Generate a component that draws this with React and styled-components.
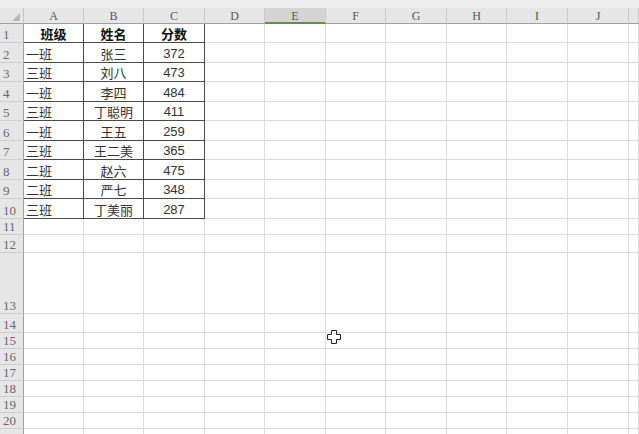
import React from 'react'
import styled, { createGlobalStyle } from 'styled-components'

const GlobalStyle = createGlobalStyle`
  html, body {
    margin: 0;
    padding: 0;
    background: #fff;
    overflow: hidden;
  }
  body {
    width: 639px;
    height: 434px;
  }
`

// row header + columns A..J, K takes the rest
const colWidths = [24, 60, 60, 61, 60, 61, 60, 61, 60, 61, 61]
const letters = ['A', 'B', 'C', 'D', 'E', 'F', 'G', 'H', 'I', 'J', '']
const rowHeights = [19, 20, 19, 20, 19, 20, 19, 20, 19, 20, 16, 18, 61, 19, 16, 16, 16, 16, 16, 16, 16]

const data = [
  ['班级', '姓名', '分数'],
  ['一班', '张三', '372'],
  ['三班', '刘八', '473'],
  ['一班', '李四', '484'],
  ['三班', '丁聪明', '411'],
  ['一班', '王五', '259'],
  ['三班', '王二美', '365'],
  ['二班', '赵六', '475'],
  ['二班', '严七', '348'],
  ['三班', '丁美丽', '287'],
]

const Sheet = styled.div`
  position: relative;
  display: grid;
  grid-template-columns: ${colWidths.map(w => w + 'px').join(' ')} 1fr;
  grid-template-rows: 8px 16px ${rowHeights.map(h => h + 'px').join(' ')};
  width: 639px;
  height: 434px;
  overflow: hidden;
`

const Band = styled.div`
  grid-column: 1 / -1;
  background: #eeeeee;
`

const Corner = styled.div`
  position: relative;
  background: #e6e6e6;
  border-right: 1px solid #c4c4c4;
  border-bottom: 1px solid #9f9f9f;
  box-sizing: border-box;
  &::after {
    content: '';
    position: absolute;
    right: 3px;
    bottom: 2px;
    width: 0;
    height: 0;
    border-left: 8px solid transparent;
    border-bottom: 8px solid #b8b8b8;
  }
`

const ColHead = styled.div`
  box-sizing: border-box;
  background: ${p => (p.$active ? '#d4d4d4' : '#e6e6e6')};
  border-right: 1px solid #c9c9c9;
  border-bottom: ${p => (p.$active ? '2px solid #5e9150' : '1px solid #9f9f9f')};
  display: flex;
  align-items: center;
  justify-content: center;
  font-family: 'Liberation Serif', 'DejaVu Serif', serif;
  font-size: 12px;
  color: #555;
  line-height: 1;
  padding-top: 1px;
`

const RowHead = styled.div`
  box-sizing: border-box;
  background: #e6e6e6;
  border-right: 1px solid #9f9f9f;
  border-bottom: 1px solid #cdcdcd;
  display: flex;
  align-items: flex-end;
  padding: 0 0 1px 3px;
  font-family: 'Liberation Serif', 'DejaVu Serif', serif;
  font-size: 13px;
  color: #666;
  line-height: 1;
`

const Cell = styled.div`
  box-sizing: border-box;
  border-right: 1px solid ${p => (p.$boxed ? '#4a4a4a' : '#dadada')};
  border-bottom: 1px solid ${p => (p.$boxed ? '#4a4a4a' : '#dadada')};
  display: flex;
  align-items: center;
  justify-content: ${p => (p.$left ? 'flex-start' : 'center')};
  padding: 1px 2px 0;
  font-family: ${p => (p.$num ? "'Liberation Sans', Arial" : "'Noto Sans CJK SC'")}, sans-serif;
  font-size: 13px;
  font-weight: ${p => (p.$bold ? 700 : 400)};
  color: ${p => (p.$bold ? '#111' : '#333')};
  white-space: nowrap;
  overflow: hidden;
  line-height: 1;
`

const Cursor = styled.svg`
  position: absolute;
  left: 327px;
  top: 330px;
  width: 14px;
  height: 14px;
`

const App = () => {
  return (
    <>
      <GlobalStyle />
      <Sheet>
        <Band />
        <Corner />
        {letters.map((l, i) => (
          <ColHead key={i} $active={l === 'E'}>{l}</ColHead>
        ))}
        {rowHeights.map((h, r) => (
          <React.Fragment key={r}>
            {/* last row is only partly on screen, its number falls below */}
            <RowHead>{r < 20 ? r + 1 : ''}</RowHead>
            {letters.map((l, c) => {
              const value = data[r] && c < 3 ? data[r][c] : ''
              return (
                <Cell
                  key={c}
                  $boxed={r < 10 && c < 3}
                  $left={c === 0 && r > 0}
                  $bold={r === 0 && c < 3}
                  $num={c === 2 && r > 0}
                >
                  {value}
                </Cell>
              )
            })}
          </React.Fragment>
        ))}
        <Cursor viewBox="0 0 14 14">
          <polygon
            points="4.5,0.5 9.5,0.5 9.5,4.5 13.5,4.5 13.5,9.5 9.5,9.5 9.5,13.5 4.5,13.5 4.5,9.5 0.5,9.5 0.5,4.5 4.5,4.5"
            fill="#fff"
            stroke="#222"
            strokeWidth="1"
          />
        </Cursor>
      </Sheet>
    </>
  )
}

export default App
